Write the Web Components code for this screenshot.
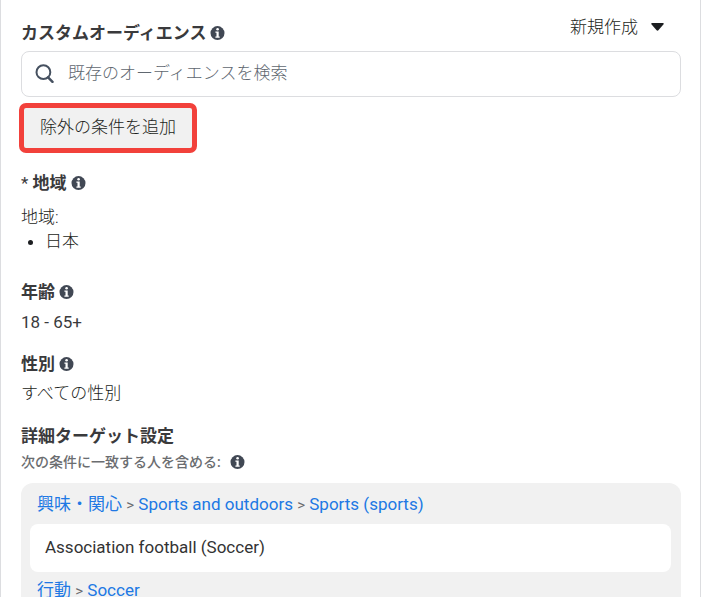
<!DOCTYPE html>
<html lang="ja">
<head>
<meta charset="utf-8">
<meta name="viewport" content="width=device-width, initial-scale=1">
<title>カスタムオーディエンス</title>
<style>
html { overflow: hidden; }
body {
  margin: 0; background: #fff; color: #1c1e21;
  font: 300 17px/24px Roboto, "Noto Sans CJK JP", sans-serif;
  --heading: #3a3a3c; --muted: #6b6d70; --link: #2078e4; --fill: #f1f1f1; --line: #dcdde0; --icon: #414854;
}
</style>
</head>
<body>
<audience-panel></audience-panel>
<script>
const define = (name, html, setup) => customElements.define(name, class extends HTMLElement {
  connectedCallback() {
    if (this.shadowRoot) return;
    const t = document.createElement('template');
    t.innerHTML = html;
    this.attachShadow({ mode: 'open' }).append(t.content.cloneNode(true));
    if (setup) setup(this, this.shadowRoot);
  }
});

define('info-icon', `
<style>:host { display: inline-flex; flex: none; } svg { width: 15px; height: 15px; }</style>
<svg viewBox="0 0 15 15" role="img" aria-label="詳細情報">
  <circle cx="7.5" cy="7.1" r="7" fill="var(--icon)"/>
  <circle cx="7.6" cy="3.3" r="1.3" fill="#fff"/>
  <path d="M5.4 5.6h3.3v4.9h1v1.2H5.4v-1.2h1.1V6.8H5.4z" fill="#fff"/>
</svg>`);

define('section-heading', `
<style>
:host { display: flex; align-items: center; }
h3 { margin: 0 4px 0 0; font-size: 17px; font-weight: 700; line-height: 24px; color: var(--heading); }
:host([sub]) h3 { font-size: 14px; font-weight: 500; color: var(--muted); margin-right: 9px; }
:host([plain]) info-icon { display: none; }
::slotted(span) { font-weight: 400; }
</style>
<h3><slot></slot></h3><info-icon></info-icon>`);

define('create-menu', `
<style>
:host { display: block; }
button { display: flex; align-items: center; gap: 13px; padding: 0; border: 0; background: none; font: inherit; color: #1c1e21; }
svg { width: 13px; height: 8px; }
</style>
<button type="button" aria-haspopup="menu"><slot></slot>
<svg viewBox="0 0 13 8" aria-hidden="true"><path d="M1.2 0h10.6q1.6.3.6 1.6L7.6 7.1q-1.1 1.2-2.2 0L.6 1.6Q-.4.3 1.2 0z" fill="#1c1e21"/></svg></button>`);

define('search-box', `
<style>
:host { display: block; }
label { display: flex; align-items: center; gap: 14px; box-sizing: border-box; height: 46px; padding: 0 14px 2px 13px; border: 1px solid var(--line); border-radius: 8px; background: #fff; }
svg { width: 19px; height: 20px; flex: none; }
input { flex: 1; min-width: 0; padding: 0; border: 0; outline: 0; background: none; font: inherit; color: #1c1e21; }
input::placeholder { color: #606770; opacity: 1; }
</style>
<label><svg viewBox="0 0 19 20" aria-hidden="true"><circle cx="8.4" cy="9.2" r="6.9" fill="none" stroke="#465160" stroke-width="2"/><path d="M13.1 14.4l4.4 4.4" stroke="#465160" stroke-width="2.5" stroke-linecap="round"/></svg>
<input type="search"></label>`, (host, root) => {
  const input = root.querySelector('input');
  input.placeholder = host.getAttribute('placeholder');
  input.setAttribute('aria-label', input.placeholder);
});

define('exclude-button', `
<style>
:host { display: block; }
button { display: block; padding: 7px 16px 9px; border: 5px solid #f2413b; border-radius: 7px; background: var(--fill); font: inherit; color: #1c1e21; }
</style>
<button type="button"><slot></slot></button>`);

define('crumb-trail', `
<style>
:host { display: block; padding: 0 7px; color: var(--muted); font-weight: 400; }
::slotted(a) { color: var(--link); text-decoration: none; }
::slotted(span) { font-size: 15px; line-height: 1; }
</style>
<nav aria-label="カテゴリ"><slot></slot></nav>`);

define('target-item', `
<style>
:host { display: block; padding: 11px 15px 13px; margin: 8px 0 6px; border-radius: 8px; background: #fff; color: #333; }
</style><slot></slot>`);

define('target-group', `
<style>
:host { display: block; padding: 9px 10px 12px 9px; border-radius: 12px; background: var(--fill); font-weight: 400; }
</style><slot></slot>`);

define('audience-panel', `
<style>
:host { display: block; box-sizing: border-box; min-height: 100vh; padding: 15px 19px 0 20px; border: solid var(--line); border-width: 0 1px; }
header { display: flex; justify-content: space-between; align-items: flex-start; padding-bottom: 6px; }
header section-heading { padding-top: 6px; }
create-menu { margin-right: 17px; }
exclude-button { margin: 6px -2px 18px; }
.region { padding-top: 10px; }
p, ul { margin: 0; }
ul { padding-left: 24px; margin-bottom: 27px; }
.age { padding: 6px 0 18px; }
.gender { padding: 5px 0 19px; }
.age { font-weight: 400; color: #3a3a3c; }
section-heading[sub] { padding: 2px 0 9px; }
</style>
<header><section-heading>カスタムオーディエンス</section-heading><create-menu>新規作成</create-menu></header>
<search-box placeholder="既存のオーディエンスを検索"></search-box>
<exclude-button>除外の条件を追加</exclude-button>
<section-heading><span>*</span> 地域</section-heading>
<p class="region">地域:</p>
<ul><li>日本</li></ul>
<section-heading>年齢</section-heading>
<p class="age">18 - 65+</p>
<section-heading>性別</section-heading>
<p class="gender">すべての性別</p>
<section-heading plain>詳細ターゲット設定</section-heading>
<section-heading sub>次の条件に一致する人を含める:</section-heading>
<target-group>
  <crumb-trail><a href="#interests">興味・関心</a> <span>&gt;</span> <a href="#outdoors">Sports and outdoors</a> <span>&gt;</span> <a href="#sports">Sports (sports)</a></crumb-trail>
  <target-item>Association football (Soccer)</target-item>
  <crumb-trail><a href="#behaviors">行動</a> <span>&gt;</span> <a href="#soccer">Soccer</a></crumb-trail>
</target-group>`);
</script>
</body>
</html>
